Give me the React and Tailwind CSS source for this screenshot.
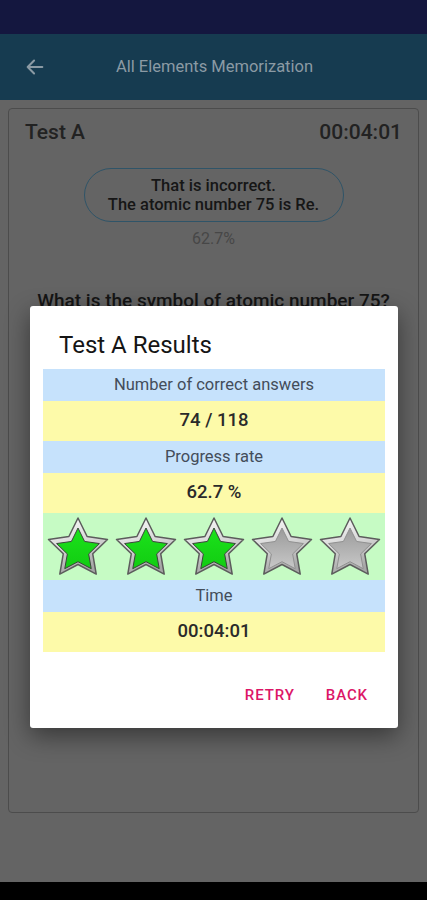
import React from 'react';

const FONT = { fontFamily: 'Roboto, "Noto Sans", Arial, sans-serif' };

const starPoints = (cx, cy, outer, inner) => {
  const pts = [];
  for (let i = 0; i < 10; i++) {
    const r = i % 2 === 0 ? outer : inner;
    const a = (Math.PI / 5) * i - Math.PI / 2;
    pts.push(`${(cx + r * Math.cos(a)).toFixed(2)},${(cy + r * Math.sin(a)).toFixed(2)}`);
  }
  return pts.join(' ');
};

const Star = ({ filled, id }) => (
  <svg width="62" height="60" viewBox="0 0 62 60">
    <defs>
      <linearGradient id={`rim-${id}`} x1="0" y1="0" x2="0.3" y2="1">
        <stop offset="0" stopColor="#ffffff" />
        <stop offset="0.55" stopColor="#d6d6d6" />
        <stop offset="1" stopColor="#a6a6a6" />
      </linearGradient>
      <linearGradient id={`core-${id}`} x1="0" y1="0" x2="0" y2="1">
        {filled ? (
          <>
            <stop offset="0" stopColor="#1be21b" />
            <stop offset="1" stopColor="#12cc12" />
          </>
        ) : (
          <>
            <stop offset="0" stopColor="#9a9a9a" />
            <stop offset="1" stopColor="#c8c8c8" />
          </>
        )}
      </linearGradient>
    </defs>
    <polygon
      points={starPoints(31, 32, 31, 15.5)}
      fill={`url(#rim-${id})`}
      stroke="#5c5c5c"
      strokeWidth="1.5"
      strokeLinejoin="round"
    />
    <polygon
      points={starPoints(31, 33.5, 22.5, 11.2)}
      fill={`url(#core-${id})`}
      stroke={filled ? '#3a443a' : '#909090'}
      strokeWidth="1"
      strokeLinejoin="round"
    />
  </svg>
);

const LabelRow = ({ children }) => (
  <div className="h-[32px] bg-[#c6e2fc] flex items-center justify-center text-[16.5px] text-[#434d5a]">
    {children}
  </div>
);

const ValueRow = ({ children }) => (
  <div className="h-[40px] bg-[#fdfaa9] flex items-center justify-center text-[18.5px] font-medium text-[#2a2a2a]">
    {children}
  </div>
);

export default function App() {
  return (
    <div className="relative w-[427px] h-[900px] bg-[#646464] flex flex-col overflow-hidden" style={FONT}>
      {/* status bar */}
      <div className="h-[34px] bg-[#14173f]" />

      {/* app bar */}
      <div className="h-[66px] bg-[#163b50] flex items-center px-6 relative">
        <svg width="22" height="22" viewBox="0 0 24 24" fill="none" stroke="#8b9aa4" strokeWidth="2.2" strokeLinecap="round" strokeLinejoin="round">
          <path d="M20 12H4M11 5l-7 7 7 7" />
        </svg>
        <div className="flex-1 text-center text-[16.5px] text-[#8b9aa4] pr-[20px]">All Elements Memorization</div>
      </div>

      {/* card */}
      <div className="px-2 pt-2">
        <div className="h-[705px] rounded border border-[#4c4c4c] flex flex-col items-center">
          <div className="w-full flex justify-between items-center px-4 pt-[8px] text-[21px] font-medium text-[#222222]">
            <span>Test A</span>
            <span>00:04:01</span>
          </div>
          <div className="mt-[19px] w-[260px] h-[54px] rounded-full border-[1.5px] border-[#2f5468] flex flex-col items-center justify-center text-[16.5px] font-medium leading-[19px] text-[#161616]">
            <span>That is incorrect.</span>
            <span>The atomic number 75 is Re.</span>
          </div>
          <div className="mt-[5px] text-[16px] text-[#474747]">62.7%</div>
          <div className="mt-[36px] text-[19px] font-medium text-[#151515]">What is the symbol of atomic number 75?</div>
        </div>
      </div>

      <div className="flex-1" />
      {/* navigation bar */}
      <div className="h-[18px] bg-black" />

      {/* results dialog */}
      <div className="absolute left-[30px] top-[306px] w-[368px] h-[422px] bg-white rounded-[3px] shadow-[0_8px_24px_rgba(0,0,0,0.45)] flex flex-col">
        <div className="pl-[29px] pt-[24px] h-[63px] text-[24px] leading-[30px] text-[#151515]">Test A Results</div>
        <div className="mx-[13px] flex flex-col">
          <LabelRow>Number of correct answers</LabelRow>
          <ValueRow>74 / 118</ValueRow>
          <LabelRow>Progress rate</LabelRow>
          <ValueRow>62.7 %</ValueRow>
          <div className="h-[67px] bg-[#c6fbc4] flex items-center justify-center gap-[6px]">
            {[true, true, true, false, false].map((f, i) => (
              <Star key={i} id={i} filled={f} />
            ))}
          </div>
          <LabelRow>Time</LabelRow>
          <ValueRow>00:04:01</ValueRow>
        </div>
        <div className="flex-1 flex items-center justify-end gap-[31px] pr-[30px] pt-[10px] text-[15px] font-medium tracking-[0.06em] text-[#dc1667]">
          <span>RETRY</span>
          <span>BACK</span>
        </div>
      </div>
    </div>
  );
}
